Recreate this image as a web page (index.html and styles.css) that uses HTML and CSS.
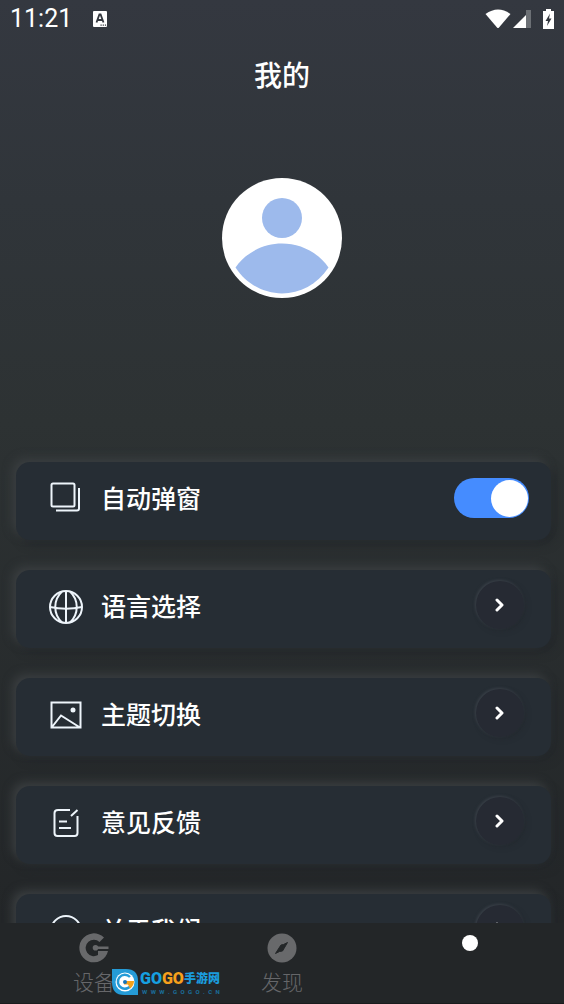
FILE: index.html
```html
<!DOCTYPE html>
<html lang="zh-CN">
<head>
<meta charset="utf-8">
<meta name="viewport" content="width=device-width, initial-scale=1">
<title>我的</title>
<link rel="stylesheet" href="styles.css">
</head>
<body>
<div class="screen">
  <header class="status">
    <time class="clock">11:21</time>
    <svg class="badge" width="16" height="18" viewBox="0 0 16 18"><rect x="1" y="1" width="14" height="16" rx="1" fill="#fff"/><path d="M4.500 12.500 7.400 4.500h1.200l2.900 8M5.600 10h4.800" fill="none" stroke="#33373e" stroke-width="1.800"/><path d="M8.500 15.200h1.200m1 0h1.200m1 0h1.200" stroke="#33373e" stroke-width="1.200"/></svg>
    <span class="signals">
      <svg width="26" height="20" viewBox="0 0 26 20"><path d="M0.500 5Q13-4 25.500 5L14 18.500q-1 1-2 0Z" fill="#fff"/></svg>
      <svg width="18" height="18" viewBox="0 0 18 18"><path d="M0 18 18 0v18Z" fill="#fff"/><path d="M13 0h5v18h-5Z" fill="#6c7075"/></svg>
      <svg class="battery" width="11" height="20" viewBox="0 0 11 20"><path d="M3 0h5v2h3v18H0V2h3Z" fill="#fff"/><path d="M7 4.500 2.500 12H5l-1 5 4.500-7.500H6Z" fill="#33373e"/></svg>
    </span>
  </header>
  <h1 class="title">我的</h1>
  <div class="profile">
    <svg class="avatar" width="120" height="120" viewBox="0 0 120 120" role="img" aria-label="头像"><circle cx="60" cy="60" r="60" fill="#fff"/><circle cx="60" cy="40" r="20" fill="#9dbaec"/><path d="M13.500 89.500C36 57.500 84 57.500 106.500 89.500 84 124 36 124 13.500 89.500Z" fill="#9dbaec"/></svg>
  </div>
  <main class="list">
    <label class="card">
      <svg class="icon" width="34" height="34" viewBox="0 0 34 34"><rect x="2.500" y="1.500" width="23" height="23" rx="1.500"/><path d="M30 6v20.500q0 2-2 2H7"/></svg>
      <span class="name">自动弹窗</span>
      <input class="switch" type="checkbox" role="switch" checked>
    </label>
    <button class="card" type="button">
      <svg class="icon" width="34" height="34" viewBox="0 0 34 34"><circle cx="17" cy="17" r="16"/><path d="M17 1v32M1 17q16 3.500 32 0M13 1.500C4 10 4 24 13 32.500M21 1.500c9 8.500 9 22.500 0 31"/></svg>
      <span class="name">语言选择</span>
      <span class="go"><svg width="10" height="14" viewBox="0 0 10 14"><path d="m2 2 5 5-5 5"/></svg></span>
    </button>
    <button class="card" type="button">
      <svg class="icon" width="34" height="34" viewBox="0 0 34 34"><path d="M2.500 4.500h29v25h-29ZM3 29l9-11.500 19 12"/><circle cx="24" cy="12" r="1.500" fill="#eef5fb"/></svg>
      <span class="name">主题切换</span>
      <span class="go"><svg width="10" height="14" viewBox="0 0 10 14"><path d="m2 2 5 5-5 5"/></svg></span>
    </button>
    <button class="card" type="button">
      <svg class="icon" width="34" height="34" viewBox="0 0 34 34"><path d="M21 4H9Q5.500 4 5.500 7v20q0 3 3 3h17q3 0 3-3V10M22 10l6.500-6M10 15.500h8M10 22h12"/></svg>
      <span class="name">意见反馈</span>
      <span class="go"><svg width="10" height="14" viewBox="0 0 10 14"><path d="m2 2 5 5-5 5"/></svg></span>
    </button>
    <button class="card" type="button">
      <svg class="icon" width="34" height="34" viewBox="0 0 34 34"><circle cx="17" cy="17" r="15"/><path d="M17 9v2M17 15v9"/></svg>
      <span class="name">关于我们</span>
      <span class="go"><svg width="10" height="14" viewBox="0 0 10 14"><path d="m2 2 5 5-5 5"/></svg></span>
    </button>
  </main>
  <nav class="tabs">
    <a class="tab" href="#device">
      <svg width="30" height="30" viewBox="0 0 30 30"><path d="M25 4.500 20.500 9A8.200 8.200 0 1 0 19 22v-4h10A14.500 14.500 0 1 1 25 4.500Z" fill="#68696b"/><path d="M17 13.500h12.500v2.500H17Z" fill="#68696b"/><circle cx="16.500" cy="14.700" r="2.800" fill="#68696b"/></svg>
      <span>设备</span>
    </a>
    <a class="tab" href="#discover">
      <svg width="30" height="30" viewBox="0 0 30 30"><circle cx="15" cy="15" r="14.500" fill="#68696b"/><path d="m20.500 9.500-3.500 6-1.500 2.500-3 .5-4 2 3.500-5.500 2-3 2.500-.5Z" fill="#232628" stroke="#232628" stroke-linejoin="round"/></svg>
      <span>发现</span>
    </a>
    <a class="tab" href="#mine" aria-label="我的" aria-current="page"><i class="dot"></i></a>
    <div class="mark">
      <svg width="26" height="26" viewBox="0 0 26 26"><path d="M0 0h14q12 0 12 12v14H12Q0 26 0 13Z" fill="#259bd7"/><circle cx="13" cy="13" r="9.500" fill="#fff"/><path d="M18 8a7 7 0 1 0 1.500 7" fill="none" stroke="#259bd7" stroke-width="2.500"/><path d="M12 12h10q0 5-4 7.500l-2-4h-4Z" fill="#f5a21b"/><circle cx="13" cy="13" r="2" fill="#1675bc"/></svg>
      <span class="mark-text">
        <span class="brand"><b class="blue">GO</b><b class="gold">GO</b><b class="cn">手游网</b></span>
        <span class="url"><i>W</i><i>W</i><i>W</i><i>.</i><i>G</i><i>O</i><i>G</i><i>O</i><i>.</i><i>C</i><i>N</i></span>
      </span>
    </div>
  </nav>
</div>
</body>
</html>
```
FILE: styles.css
```css
* { box-sizing: border-box; }
body {
  margin: 0;
  font-family: Roboto, "Noto Sans CJK SC", sans-serif;
  color: #fff;
}
.screen {
  display: flex;
  flex-direction: column;
  height: 100vh;
  overflow: hidden;
  background: linear-gradient(#343840 0, #30353a 20%, #2d3233 42%, #232628 92%);
}
.status {
  display: flex;
  flex: none;
  align-items: center;
  height: 38px;
  padding: 0 10px;
}
.clock { font-size: 25px; line-height: 38px; }
.badge { margin-left: 20px; }
.signals {
  display: flex;
  align-items: center;
  gap: 4px;
  margin-left: auto;
}
.signals svg:first-child { margin-right: -2px; }
.battery { margin-left: 8px; }
.title {
  flex: none;
  margin: 19px 0 0;
  font-size: 28px;
  font-weight: 500;
  line-height: 40px;
  text-align: center;
}
.profile {
  display: flex;
  flex: none;
  justify-content: center;
  padding: 81px 0 144px;
}
.list {
  display: flex;
  flex: 1;
  flex-direction: column;
  gap: 30px;
  min-height: 0;
  padding: 20px 13px 0 16px;
  overflow: hidden;
}
.card {
  display: flex;
  flex: none;
  align-items: center;
  width: 100%;
  height: 78px;
  padding: 0 22px 4px 33px;
  border: 0;
  border-radius: 14px;
  background: #262d34;
  box-shadow: -4px -4px 10px #3a3e40, 4px 4px 10px #23272a;
  color: #fff;
  font: inherit;
  text-align: left;
  cursor: pointer;
}
.icon {
  fill: none;
  stroke: #eef5fb;
  stroke-width: 2;
}
.name {
  flex: 1;
  margin-left: 18px;
  padding-top: 2px;
  font-size: 25px;
  font-weight: 500;
  line-height: 36px;
}
.switch {
  display: flex;
  align-items: center;
  justify-content: flex-end;
  width: 75px;
  height: 40px;
  margin: 0 0 2px;
  padding: 1px;
  border-radius: 20px;
  appearance: none;
  background: #6b7078;
}
.switch::before {
  width: 37px;
  height: 37px;
  border-radius: 50%;
  background: #fff;
  content: "";
}
.switch:checked { background: #458cff; }
.switch:not(:checked) { justify-content: flex-start; }
.go {
  display: grid;
  place-items: center;
  width: 48px;
  height: 48px;
  margin: 0 5px 4px 0;
  border-radius: 50%;
  background: #262a33;
  box-shadow: -1px -1px 3px #3a4149, 2px 2px 5px #242a30;
}
.go path {
  fill: none;
  stroke: #fff;
  stroke-width: 3;
  stroke-linecap: round;
  stroke-linejoin: round;
}
.tabs {
  position: relative;
  display: grid;
  flex: none;
  grid-template-columns: repeat(3, 1fr);
  height: 81px;
  border-bottom: 1px solid #1a1c1d;
  background: #232628;
}
.tab {
  display: flex;
  flex-direction: column;
  align-items: center;
  padding-top: 10px;
  color: #66676a;
  font-size: 21px;
  font-weight: 300;
  line-height: 32px;
  text-decoration: none;
}
.tab span { margin-top: 4px; }
.dot {
  width: 16px;
  height: 16px;
  margin-top: 2px;
  border-radius: 50%;
  background: #fff;
}
.mark {
  position: absolute;
  bottom: 8px;
  left: 112px;
  display: flex;
  align-items: center;
  gap: 2px;
}
.mark-text { display: flex; flex-direction: column; }
.brand {
  display: flex;
  align-items: center;
  height: 20px;
  font-weight: 900;
  line-height: 20px;
}
.blue, .gold { font-size: 16px; }
.blue { color: #16a0e0; }
.gold { color: #f7a01c; }
.cn { color: #1b9bdc; font-size: 12px; }
.url {
  display: flex;
  justify-content: space-between;
  padding-left: 2px;
  color: #1a6e9c;
  font-size: 6px;
  font-weight: 700;
  line-height: 6px;
}
.url i { font-style: normal; }
```
